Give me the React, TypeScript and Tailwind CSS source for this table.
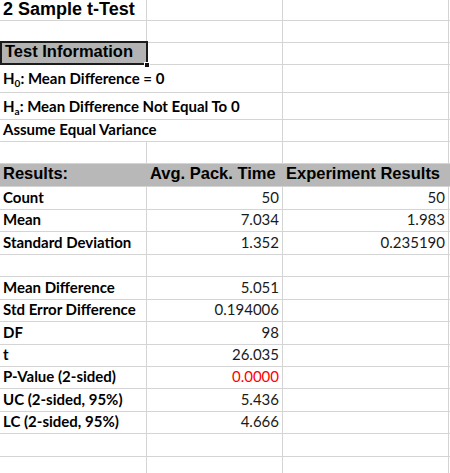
import { ReactNode } from 'react';

const line = 'border-[#d4d4d4]';
const label = "font-['Lato',sans-serif] font-bold text-[15px] leading-none text-black";
const value = "font-['Lato',sans-serif] text-[15px] leading-none text-[#1a1a1a]";
const head = "font-['Liberation_Sans',Arial,sans-serif] font-bold text-[16.5px] leading-none text-black";

type RowProps = { h: string; className?: string; children?: ReactNode };

const Row = ({ h, className = '', children }: RowProps) => (
  <div className={`grid grid-cols-[147px_136px_166px_1fr] border-b ${line} ${h} ${className}`}>
    {children}
  </div>
);

type CellProps = {
  className?: string;
  pb?: string;
  right?: boolean;
  border?: boolean;
  children?: ReactNode;
};

const Cell = ({ className = '', pb = 'pb-[4px]', right, border = true, children }: CellProps) => (
  <div
    className={`flex items-end whitespace-nowrap px-[3px] ${pb} ${right ? 'justify-end' : ''} ${
      border ? `border-r ${line}` : ''
    } ${className}`}>
    {children}
  </div>
);

const Empty = ({ h }: { h: string }) => (
  <Row h={h}>
    <Cell />
    <Cell />
    <Cell />
    <div />
  </Row>
);

const Hyp = ({ sub, text }: { sub: string; text: string }) => (
  <span className={label}>
    H<sub className="text-[10px] relative top-[3px] align-baseline">{sub}</sub>: {text}
  </span>
);

const stats: { name: string; a: string; b?: string; h: string; red?: boolean }[] = [
  { name: 'Count', a: '50', b: '50', h: 'h-[23px]' },
  { name: 'Mean', a: '7.034', b: '1.983', h: 'h-[22px]' },
  { name: 'Standard Deviation', a: '1.352', b: '0.235190', h: 'h-[23px]' },
  { name: '', a: '', h: 'h-[22px]' },
  { name: 'Mean Difference', a: '5.051', h: 'h-[23px]' },
  { name: 'Std Error Difference', a: '0.194006', h: 'h-[22px]' },
  { name: 'DF', a: '98', h: 'h-[23px]' },
  { name: 't', a: '26.035', h: 'h-[22px]' },
  { name: 'P-Value (2-sided)', a: '0.0000', h: 'h-[22px]', red: true },
  { name: 'UC (2-sided, 95%)', a: '5.436', h: 'h-[23px]' },
  { name: 'LC (2-sided, 95%)', a: '4.666', h: 'h-[22px]' },
];

const App = () => {
  return (
    <div className="w-[450px] h-[473px] overflow-hidden bg-white">
      <Row h="h-[21px]">
        <Cell pb="pb-[4px]">
          <span className="font-['Liberation_Sans',Arial,sans-serif] font-bold text-[18px] leading-none text-black">
            2 Sample t-Test
          </span>
        </Cell>
        <Cell />
        <Cell />
        <div />
      </Row>
      <Empty h="h-[22px]" />
      <Row h="h-[22px]">
        <div className="relative">
          <div className="absolute -top-[2px] left-0 right-[-1px] bottom-[-1px] border-2 border-[#1c1c1c] bg-[#b3b3b3] flex items-end px-[3px] pb-[4px]">
            <span className={head}>Test Information</span>
          </div>
          <div className="absolute right-[-3px] bottom-[-4px] w-[6px] h-[6px] bg-[#111] border border-white" />
        </div>
        <Cell />
        <Cell />
        <div />
      </Row>
      <Row h="h-[28px]">
        <Cell pb="pb-[6px]" border={false} className="col-span-2 border-r border-[#d4d4d4]">
          <Hyp sub="0" text="Mean Difference = 0" />
        </Cell>
        <Cell />
        <div />
      </Row>
      <Row h="h-[27px]">
        <Cell pb="pb-[5px]" border={false} className="col-span-2 border-r border-[#d4d4d4]">
          <Hyp sub="a" text="Mean Difference Not Equal To 0" />
        </Cell>
        <Cell />
        <div />
      </Row>
      <Row h="h-[22px]">
        <Cell border={false} className="col-span-2 border-r border-[#d4d4d4]">
          <span className={label}>Assume Equal Variance</span>
        </Cell>
        <Cell />
        <div />
      </Row>
      <Empty h="h-[22px]" />
      <Row h="h-[23px]" className="bg-[#b8b8b8]">
        <Cell border={false} pb="pb-[5px]">
          <span className={head}>Results:</span>
        </Cell>
        <Cell border={false} pb="pb-[5px]" className="px-[1px]">
          <span className={head}>Avg. Pack. Time</span>
        </Cell>
        <Cell border={false} pb="pb-[5px]">
          <span className={head}>Experiment Results</span>
        </Cell>
        <div />
      </Row>
      {stats.map((s, i) => (
        <Row key={i} h={s.h}>
          <Cell>
            <span className={label}>{s.name}</span>
          </Cell>
          <Cell right>
            <span className={s.red ? `${value} text-[#ff0000]` : value}>{s.a}</span>
          </Cell>
          <Cell right>
            <span className={value}>{s.b}</span>
          </Cell>
          <div />
        </Row>
      ))}
      <Empty h="h-[23px]" />
      <Empty h="h-[23px]" />
    </div>
  );
};

export default App;
